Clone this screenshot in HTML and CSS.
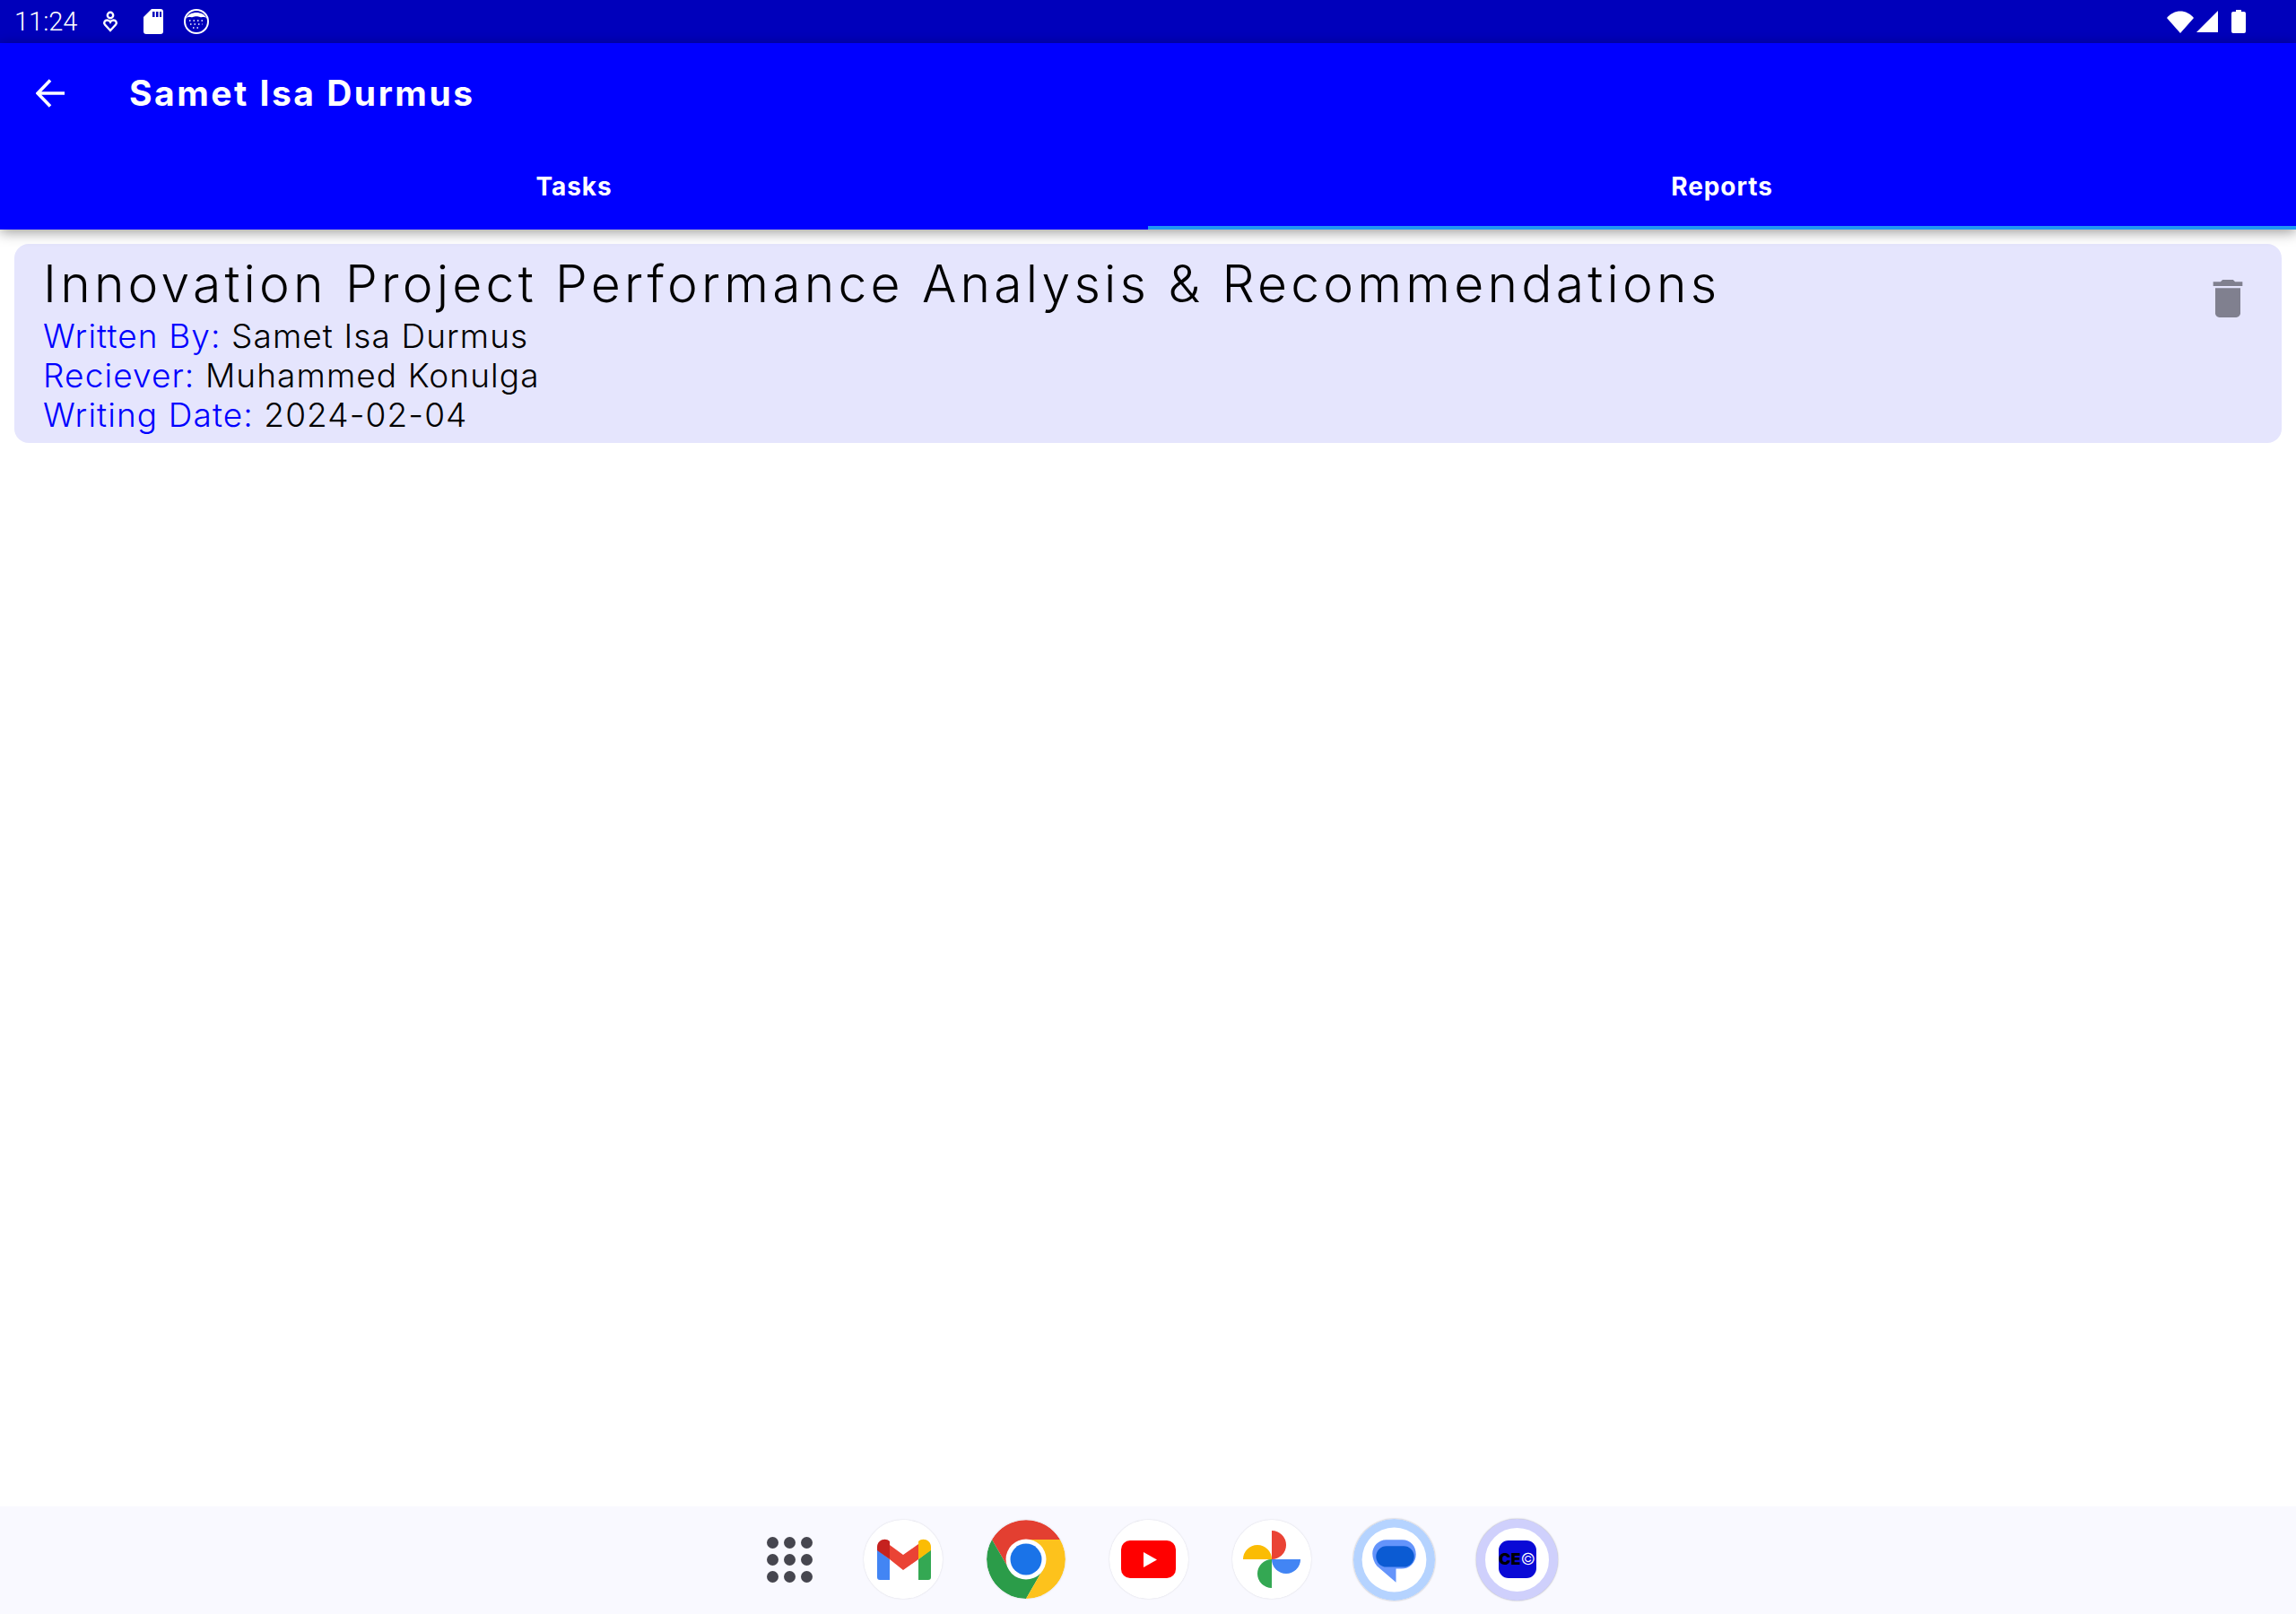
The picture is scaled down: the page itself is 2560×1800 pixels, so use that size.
FILE: index.html
```html
<!DOCTYPE html>
<html lang="en">
<head>
    <meta charset="UTF-8">
    <title>Samet Isa Durmus</title>
    <link rel="stylesheet" href="styles.css">
</head>
<body>
    <div class="status-bar">
        <span class="clock">11:24</span>
        <svg class="st-heart" width="18" height="24" viewBox="0 0 18 24" fill="none" stroke="#fff" stroke-width="2.4">
            <circle cx="9" cy="5" r="3.2"/>
            <path d="M9 22 L3 15.5 C1 13 3 10.5 5.5 10.5 C7 10.5 8.3 11.3 9 12.5 C9.7 11.3 11 10.5 12.5 10.5 C15 10.5 17 13 15 15.5 Z"/>
        </svg>
        <svg class="st-sd" width="22" height="28" viewBox="0 0 22 28">
            <path fill="#fff" d="M9 0 H19 A3 3 0 0 1 22 3 V25 A3 3 0 0 1 19 28 H3 A3 3 0 0 1 0 25 V9 Z"/>
            <path fill="#0000bb" d="M10 3 h2.5 v6 h-2.5z M14 3 h2.500 v6 h-2.500z M18 3 h2 v6 h-2z"/>
        </svg>
        <svg class="st-face" width="28" height="28" viewBox="0 0 28 28">
            <circle cx="14" cy="14" r="13" fill="#0000bb" stroke="#fff" stroke-width="2"/>
            <path fill="#fff" d="M3 10 C6 2 22 2 25 10 C22 8 20 10 18 9 C16 8 12 8 10 9 C8 10 6 8 3 10 Z"/>
            <path fill="none" stroke="#fff" stroke-width="1.500" stroke-dasharray="1.500 3" d="M6 13 H22 M7 17 H21 M10 21 H18"/>
        </svg>
        <div class="status-right">
            <svg width="30" height="25" viewBox="0 0 30 25"><path fill="#fff" d="M0 8 C8 -2 22 -2 30 8 L15 25 Z"/></svg>
            <svg class="st-signal" width="24" height="24" viewBox="0 0 24 24"><path fill="#fff" d="M24 0 V24 H0 Z"/></svg>
            <svg class="st-battery" width="16" height="26" viewBox="0 0 16 26"><path fill="#fff" d="M5 0 H11 V2 H14 A2 2 0 0 1 16 4 V24 A2 2 0 0 1 14 26 H2 A2 2 0 0 1 0 24 V4 A2 2 0 0 1 2 2 H5 Z"/></svg>
        </div>
    </div>

    <header class="app-header">
        <div class="toolbar">
            <svg class="back-icon" width="32" height="32" viewBox="0 0 32 32" fill="none" stroke="#fff" stroke-width="3.600">
                <path d="M32 16 H2 M16 1.500 L2 16 L16 30.500"/>
            </svg>
            <h1 class="toolbar-title">Samet Isa Durmus</h1>
        </div>
        <div class="tabs">
            <div class="tab">Tasks</div>
            <div class="tab tab-active">Reports</div>
        </div>
    </header>

    <main class="content">
        <div class="report-card">
            <div class="report-text">
                <div class="report-title">Innovation Project Performance Analysis &amp; Recommendations</div>
                <div class="report-line"><span class="label">Written By:</span> Samet Isa Durmus</div>
                <div class="report-line"><span class="label">Reciever:</span> Muhammed Konulga</div>
                <div class="report-line"><span class="label">Writing Date:</span> 2024-02-04</div>
            </div>
            <svg class="trash-icon" width="56" height="56" viewBox="0 0 24 24">
                <path fill="#80808f" d="M6 19c0 1.100.9 2 2 2h8c1.100 0 2-.9 2-2V7H6v12zM19 4h-3.500l-1-1h-5l-1 1H5v2h14V4z"/>
            </svg>
        </div>
    </main>

    <footer class="dock">
        <div class="dock-slot dock-grid">
            <div class="apps-grid">
                <i></i><i></i><i></i><i></i><i></i><i></i><i></i><i></i><i></i>
            </div>
        </div>
        <div class="dock-slot">
            <svg class="app-icon" width="88" height="88" viewBox="0 0 88 88">
                <circle cx="44" cy="44" r="44" fill="#fff"/>
                <path fill="#4285f4" d="M15 33 L29 44 V67 H18 A3 3 0 0 1 15 64 Z"/>
                <path fill="#34a853" d="M75 33 L61 44 V67 H72 A3 3 0 0 0 75 64 Z"/>
                <path fill="#ea4335" d="M29 28 L44 39 L61 27 V44 L44 56 L29 44 Z"/>
                <path fill="#c5221f" d="M15 34 V30 C15 23 24 19 29 24 V44 Z"/>
                <path fill="#fbbc04" d="M75 34 V30 C75 23 66 19 61 24 V44 Z"/>
            </svg>
        </div>
        <div class="dock-slot">
            <svg class="app-icon" width="88" height="88" viewBox="0 0 88 88">
                <path fill="#e33f31" d="M6 22 A44 44 0 0 1 82 22 H44 L25 55 Z"/>
                <path fill="#2b9c49" d="M6 22 A44 44 0 0 0 44 88 L63 55 H25 Z"/>
                <path fill="#fdc21c" d="M82 22 A44 44 0 0 1 44 88 L63 55 L44 22 Z"/>
                <circle cx="44" cy="44" r="22.500" fill="#fff"/>
                <circle cx="44" cy="44" r="17.500" fill="#1a73e8"/>
            </svg>
        </div>
        <div class="dock-slot">
            <svg class="app-icon" width="88" height="88" viewBox="0 0 88 88">
                <circle cx="44" cy="44" r="44" fill="#fff"/>
                <rect x="13" y="23" width="61" height="42" rx="10" fill="#ff0000"/>
                <path fill="#fff" d="M38 36 L53 44.500 L38 53 Z"/>
            </svg>
        </div>
        <div class="dock-slot">
            <svg class="app-icon" width="88" height="88" viewBox="0 0 88 88">
                <circle cx="44" cy="44" r="44" fill="#fff"/>
                <path fill="#ea4335" d="M44 12 A16 16 0 0 1 44 44 Z"/>
                <path fill="#fbbc04" d="M12 44 A16 16 0 0 1 44 44 Z"/>
                <path fill="#4285f4" d="M76 44 A16 16 0 0 1 44 44 Z"/>
                <path fill="#34a853" d="M44 76 A16 16 0 0 1 44 44 Z"/>
            </svg>
        </div>
        <div class="dock-slot">
            <svg class="app-ring" width="91" height="91" viewBox="0 0 90 90">
                <circle cx="45" cy="45" r="45" fill="#b5d3ff"/>
                <circle cx="45" cy="45" r="35.500" fill="#fff"/>
                <path fill="#6494fb" d="M36 23 H54 C63 23 69 30 69 39 C69 48 62 55 53 55 H47 V70 L26 52 C23 48 21 43 21 38 C21 30 28 23 36 23 Z"/>
                <rect x="25" y="30" width="42" height="23" rx="11.500" fill="#0b5bd3"/>
            </svg>
        </div>
        <div class="dock-slot">
            <div class="ceo-ring">
                <div class="ceo-tile"><span class="ceo-text">CE</span><span class="ceo-mark">©</span></div>
            </div>
        </div>
    </footer>
</body>
</html>
```

FILE: styles.css
```css
body {
    margin: 0;
    height: 1800px;
    display: flex;
    flex-direction: column;
    background-color: #fff;
    font-family: "Inter", "Liberation Sans", sans-serif;
    color: #000;
    overflow: hidden;
}

.status-bar {
    height: 48px;
    display: flex;
    align-items: center;
    padding: 0 56px 0 16px;
    background-color: #0000bb;
    color: #fff;
    flex-shrink: 0;
}

.clock {
    font-family: "Roboto", sans-serif;
    font-weight: 300;
    font-size: 29px;
    width: 98px;
}

.st-heart {
    margin-right: 28px;
}

.st-sd {
    margin-right: 23px;
}

.status-right {
    margin-left: auto;
    display: flex;
    align-items: center;
}

.st-signal {
    margin-left: 3px;
}

.st-battery {
    margin-left: 15px;
}

.app-header {
    position: relative;
    height: 208px;
    flex-shrink: 0;
    background-color: #0000ff;
    color: #fff;
    box-shadow: 0 3px 14px rgba(0, 0, 0, 0.4);
}

.toolbar {
    height: 112px;
    display: flex;
    align-items: center;
    padding-left: 40px;
}

.back-icon {
    margin-right: 72px;
}

.toolbar-title {
    margin: 0 0 2px 0;
    font-size: 39px;
    font-weight: 700;
    letter-spacing: 2.5px;
}

.tabs {
    display: flex;
    height: 96px;
}

.tab {
    flex: 1;
    display: flex;
    align-items: center;
    justify-content: center;
    padding-bottom: 1px;
    font-size: 28px;
    font-weight: 700;
    letter-spacing: 0.9px;
}

.tab-active {
    padding-top: 3px;
    padding-bottom: 0;
    border-bottom: 4px solid #2196f3;
}

.content {
    flex: 1;
    padding: 16px;
}

.report-card {
    display: flex;
    justify-content: space-between;
    align-items: flex-start;
    height: 222px;
    box-sizing: border-box;
    padding: 12px 32px 0 32px;
    background-color: #e5e5fd;
    border-radius: 16px;
}

.report-title {
    font-size: 57px;
    font-weight: 300;
    line-height: 66px;
    letter-spacing: 4.2px;
    margin-bottom: 3px;
}

.report-line {
    font-size: 37px;
    font-weight: 300;
    line-height: 44px;
    letter-spacing: 1.1px;
}

.label {
    color: #0000ff;
}

.trash-icon {
    margin-top: 21px;
}

.dock {
    height: 120px;
    flex-shrink: 0;
    display: flex;
    align-items: center;
    padding: 0 0 2px 823px;
    box-sizing: border-box;
    background-color: #f9f9ff;
}

.dock-slot {
    width: 137px;
    display: flex;
    justify-content: center;
}

.dock-grid {
    width: 115px;
}

.apps-grid {
    display: grid;
    grid-template-columns: repeat(3, 13px);
    gap: 6px;
}

.apps-grid i {
    height: 13px;
    border-radius: 50%;
    background-color: #46464f;
}

.app-icon {
    border-radius: 50%;
    box-shadow: 0 0 2px rgba(0, 0, 0, 0.15);
}

.app-ring {
    border-radius: 50%;
    box-shadow: 0 0 2px rgba(0, 0, 0, 0.35);
}

.ceo-ring {
    width: 71px;
    height: 71px;
    display: flex;
    align-items: center;
    justify-content: center;
    border: 10px solid #cfd0fc;
    border-radius: 50%;
    background-color: #fff;
    box-shadow: 0 0 2px rgba(0, 0, 0, 0.35);
}

.ceo-tile {
    width: 42px;
    height: 42px;
    display: flex;
    align-items: center;
    justify-content: center;
    background-color: #0a0ad6;
    border-radius: 11px;
    font-size: 18px;
    line-height: 1;
}

.ceo-text {
    color: #000;
    font-weight: 900;
}

.ceo-mark {
    color: #fff;
    font-weight: 300;
}
```
